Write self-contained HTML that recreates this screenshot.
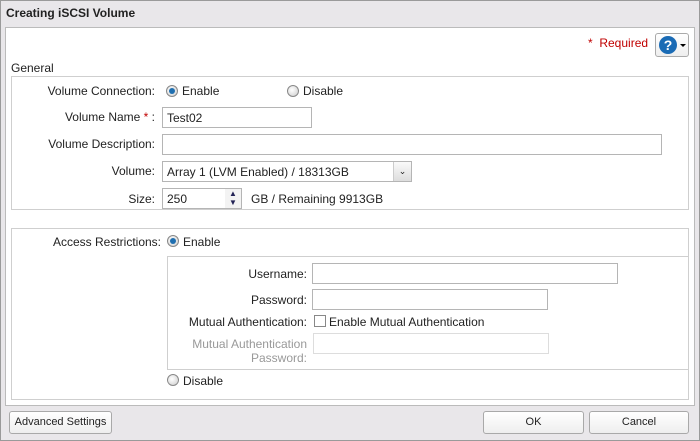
<!DOCTYPE html><html><head><style>
*{box-sizing:border-box}
body{margin:0;width:700px;height:441px;background:#e9e7ea;font-family:"Liberation Sans",sans-serif;font-size:12px;color:#222;position:relative;overflow:hidden}
.a{position:absolute}
.box{position:absolute;border:1px solid #cfcfcf;background:#fff}
.lbl{position:absolute;text-align:right;white-space:nowrap}
.inp{position:absolute;border:1px solid #b5b5b5;background:#fff;height:21px;padding:3px 4px}
.rad{position:absolute;width:12px;height:12px;border-radius:50%;border:1px solid #888;background:radial-gradient(circle at 40% 40%,#fff,#ccc)}
.rad.on::after{content:"";position:absolute;left:2px;top:2px;width:6px;height:6px;border-radius:50%;background:#1f6fb0}
.btn{position:absolute;border:1px solid #a9a9a9;border-radius:3px;background:linear-gradient(#fff,#eee);text-align:center;font-size:11px;line-height:20px}
</style></head><body>
<div class="a" style="left:0;top:0;width:700px;height:441px;border:1px solid #9a9a9a"></div>
<div class="a" style="left:6px;top:6px;font-weight:bold;font-size:12px">Creating iSCSI Volume</div>
<div class="a" style="left:5px;top:27px;width:690px;height:379px;background:#fff;border:1px solid #bbb"></div>
<div class="a" style="left:588px;top:36px;color:#c00000">*&nbsp; Required</div>
<div class="a" style="left:655px;top:33px;width:34px;height:24px;border:1px solid #aaa;border-radius:3px;background:linear-gradient(#fff,#eee)">
<div class="a" style="left:3px;top:2px;width:18px;height:18px;border-radius:50%;background:#1a6bb5;color:#fff;font-weight:bold;font-size:14px;text-align:center;line-height:18px">?</div>
<div class="a" style="left:24px;top:10px;border-left:3px solid transparent;border-right:3px solid transparent;border-top:3px solid #000"></div></div>
<div class="a" style="left:11px;top:61px">General</div>
<div class="box" style="left:11px;top:76px;width:678px;height:134px"></div>
<div class="lbl" style="right:545px;top:84px">Volume Connection:</div>
<div class="rad on" style="left:166px;top:85px"></div><div class="a" style="left:182px;top:84px">Enable</div>
<div class="rad" style="left:287px;top:85px"></div><div class="a" style="left:303px;top:84px">Disable</div>
<div class="lbl" style="right:545px;top:110px">Volume Name <span style="color:#c00000">*</span> :</div>
<div class="inp" style="left:162px;top:107px;width:150px">Test02</div>
<div class="lbl" style="right:545px;top:137px">Volume Description:</div>
<div class="inp" style="left:162px;top:134px;width:500px"></div>
<div class="lbl" style="right:545px;top:164px">Volume:</div>
<div class="inp" style="left:162px;top:161px;width:250px">Array 1 (LVM Enabled) / 18313GB</div>
<div class="a" style="left:393px;top:162px;width:18px;height:19px;background:linear-gradient(#fafafa,#ddd);border-left:1px solid #ccc;text-align:center;font-size:9px;line-height:19px">&#8964;</div>
<div class="lbl" style="right:545px;top:192px">Size:</div>
<div class="inp" style="left:162px;top:188px;width:80px">250</div>
<div class="a" style="left:225px;top:189px;width:16px;height:19px;background:#f3f3f3;font-size:8px;line-height:9px;text-align:center;color:#225">&#9650;<br>&#9660;</div>
<div class="a" style="left:251px;top:192px">GB / Remaining 9913GB</div>
<div class="box" style="left:11px;top:228px;width:678px;height:172px"></div>
<div class="lbl" style="right:539px;top:235px">Access Restrictions:</div>
<div class="rad on" style="left:167px;top:235px"></div><div class="a" style="left:183px;top:235px">Enable</div>
<div class="box" style="left:167px;top:256px;width:522px;height:114px"></div>
<div class="lbl" style="right:393px;top:267px">Username:</div>
<div class="inp" style="left:312px;top:263px;width:306px"></div>
<div class="lbl" style="right:393px;top:293px">Password:</div>
<div class="inp" style="left:312px;top:289px;width:236px"></div>
<div class="lbl" style="right:393px;top:315px">Mutual Authentication:</div>
<div class="a" style="left:314px;top:315px;width:12px;height:12px;border:1px solid #888;background:#fff"></div>
<div class="a" style="left:329px;top:315px">Enable Mutual Authentication</div>
<div class="lbl" style="right:393px;top:337px;color:#999;line-height:14px">Mutual Authentication<br>Password:</div>
<div class="inp" style="left:313px;top:333px;width:236px;border-color:#ddd"></div>
<div class="rad" style="left:167px;top:374px"></div><div class="a" style="left:183px;top:374px">Disable</div>
<div class="btn" style="left:9px;top:411px;width:103px;height:23px">Advanced Settings</div>
<div class="btn" style="left:483px;top:411px;width:101px;height:23px">OK</div>
<div class="btn" style="left:589px;top:411px;width:100px;height:23px">Cancel</div>
</body></html>
